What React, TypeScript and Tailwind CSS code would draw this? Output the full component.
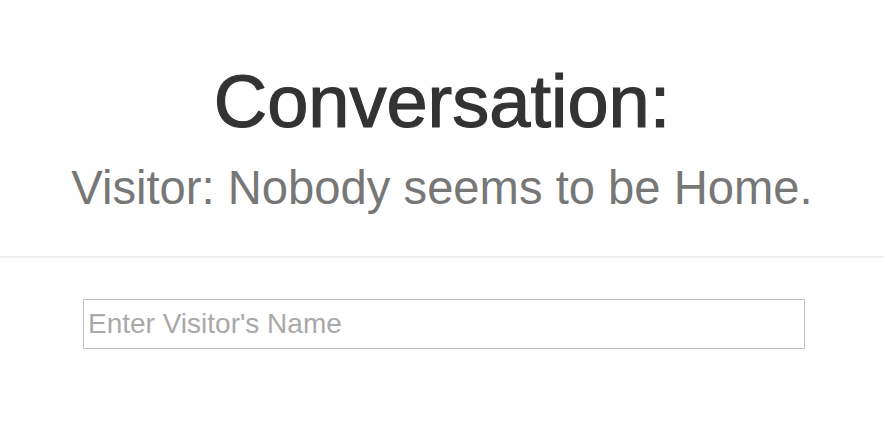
export default function App() {
  return (
    <div className="min-h-[432px] w-[884px] bg-white font-['Liberation_Sans',Arial,sans-serif]">
      <div className="pt-[65px] text-center">
        <h1 className="text-[74px] leading-none text-[#333333] [-webkit-text-stroke:1.2px_#333333]">Conversation:</h1>
        <p className="mt-[25px] text-[47.2px] leading-[47px] text-[#777777]">Visitor: Nobody seems to be Home.</p>
      </div>
      <hr className="mt-[45px] border-0 border-t-2 border-[#eeeeee]" />
      <div className="pt-[41px] pl-[83px]">
        <input
          type="text"
          placeholder="Enter Visitor's Name"
          className="box-border h-[50px] w-[722px] border border-[#c0c0c0] px-[4px] text-[28px] text-[#333333] outline-none placeholder:text-[#a9a9a9]"
        />
      </div>
    </div>
  )
}
